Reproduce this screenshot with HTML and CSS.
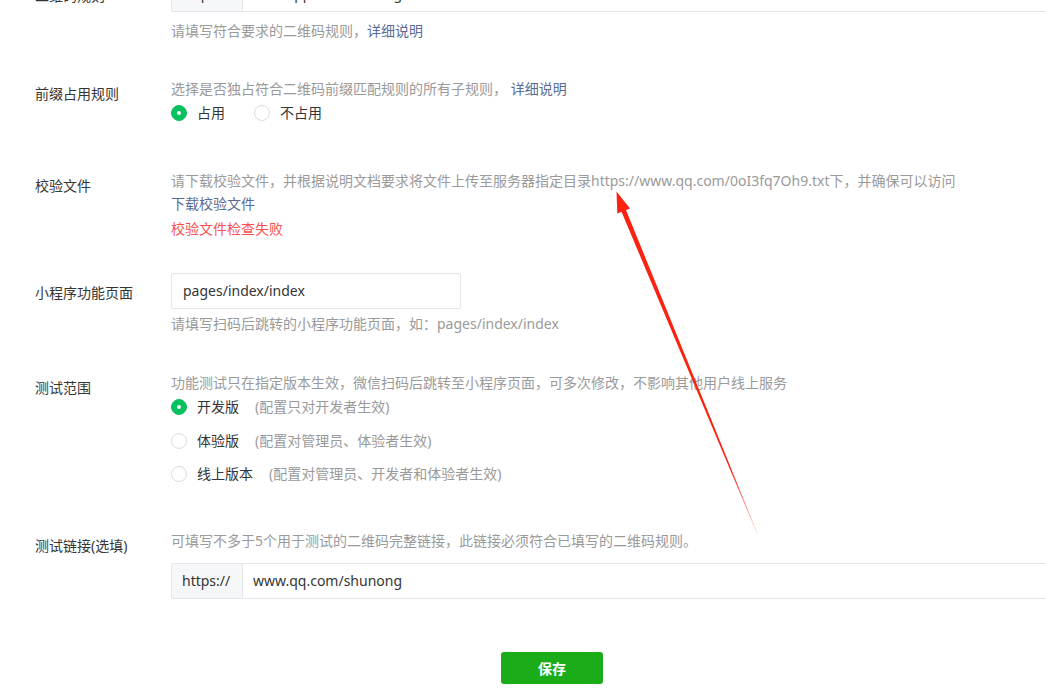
FILE: index.html
```html
<!DOCTYPE html>
<html lang="zh-CN">
<head>
<meta charset="utf-8">
<title>二维码规则</title>
<link rel="stylesheet" href="styles.css">
</head>
<body>
<div class="page">
  <div class="form">
    <div class="row row-first">
      <div class="label label-input">二维码规则</div>
      <div class="content">
        <div class="input-group wide">
          <span class="prefix">https://</span>
          <span class="input-text">www.qq.com/shunong</span>
        </div>
        <div class="hint hint-after-top">请填写符合要求的二维码规则，<a class="link">详细说明</a></div>
      </div>
    </div>

    <div class="row row-prefix">
      <div class="label">前缀占用规则</div>
      <div class="content">
        <div class="hint">选择是否独占符合二维码前缀匹配规则的所有子规则， <a class="link">详细说明</a></div>
        <div class="radio-line inline">
          <label class="radio checked"><span class="dot"></span><span class="radio-text">占用</span></label>
          <label class="radio"><span class="dot"></span><span class="radio-text">不占用</span></label>
        </div>
      </div>
    </div>

    <div class="row row-file">
      <div class="label">校验文件</div>
      <div class="content">
        <div class="hint">请下载校验文件，并根据说明文档要求将文件上传至服务器指定目录https://www.qq.com/0oI3fq7Oh9.txt下，并确保可以访问</div>
        <div class="line link-line"><a class="link">下载校验文件</a></div>
        <div class="line error-line">校验文件检查失败</div>
      </div>
    </div>

    <div class="row row-page">
      <div class="label label-input">小程序功能页面</div>
      <div class="content">
        <div class="input-box">pages/index/index</div>
        <div class="hint hint-after-input">请填写扫码后跳转的小程序功能页面，如：pages/index/index</div>
      </div>
    </div>

    <div class="row row-range">
      <div class="label">测试范围</div>
      <div class="content">
        <div class="hint">功能测试只在指定版本生效，微信扫码后跳转至小程序页面，可多次修改，不影响其他用户线上服务</div>
        <div class="radio-line r1">
          <label class="radio checked"><span class="dot"></span><span class="radio-text">开发版</span><span class="radio-note">(配置只对开发者生效)</span></label>
        </div>
        <div class="radio-line r2">
          <label class="radio"><span class="dot"></span><span class="radio-text">体验版</span><span class="radio-note">(配置对管理员、体验者生效)</span></label>
        </div>
        <div class="radio-line r3">
          <label class="radio"><span class="dot"></span><span class="radio-text">线上版本</span><span class="radio-note">(配置对管理员、开发者和体验者生效)</span></label>
        </div>
      </div>
    </div>

    <div class="row row-link">
      <div class="label">测试链接(选填)</div>
      <div class="content">
        <div class="hint">可填写不多于5个用于测试的二维码完整链接，此链接必须符合已填写的二维码规则。</div>
        <div class="input-group wide link-group">
          <span class="prefix">https://</span>
          <span class="input-text">www.qq.com/shunong</span>
        </div>
      </div>
    </div>

    <div class="actions">
      <button class="btn-save" type="button">保存</button>
    </div>
  </div>

  <svg class="arrow" width="1046" height="695" viewBox="0 0 1046 695" aria-hidden="true">
    <defs>
      <linearGradient id="fade" x1="616" y1="192" x2="758" y2="535" gradientUnits="userSpaceOnUse">
        <stop offset="0" stop-color="#fa2311"/>
        <stop offset="0.8" stop-color="#fa2311"/>
        <stop offset="1" stop-color="#fa2311" stop-opacity="0.15"/>
      </linearGradient>
    </defs>
    <polygon fill="url(#fade)" points="616.5,191.5 630,208.5 626,210 758.2,535 757.6,535 621.5,211.8 617.3,213.6"/>
  </svg>
</div>
</body>
</html>
```

FILE: styles.css
```css
* {
  box-sizing: border-box;
}

html, body {
  margin: 0;
  padding: 0;
  background: #ffffff;
}

body {
  font-family: "Noto Sans", "Noto Sans CJK SC", sans-serif;
  font-size: 14px;
  line-height: 20px;
  color: #353535;
}

.page {
  position: relative;
  width: 1046px;
  height: 695px;
  overflow: hidden;
}

.form {
  padding-left: 35px;
}

.row {
  display: flex;
}

.label {
  width: 136px;
  flex: none;
  padding-top: 5px;
  line-height: 20px;
  color: #353535;
  white-space: nowrap;
}

.label.label-input {
  padding-top: 10px;
}

.content {
  flex: 1;
  min-width: 0;
}

.hint {
  color: #9a9a9a;
  white-space: nowrap;
}

.link {
  color: #576b95;
  text-decoration: none;
}

.line {
  white-space: nowrap;
}

.error-line {
  color: #fa5151;
  margin-top: 5px;
}

.link-line {
  margin-top: 3px;
}

/* input group with prefix */
.input-group {
  display: flex;
  align-items: stretch;
  height: 36px;
  border: 1px solid #e4e6eb;
  border-right: none;
  border-radius: 2px 0 0 2px;
  background: #fff;
  margin-right: -4px;
}

.prefix {
  width: 71px;
  flex: none;
  display: flex;
  align-items: center;
  padding-left: 10px;
  background: #f6f7f9;
  border-right: 1px solid #e4e6eb;
  color: #353535;
}

.input-text {
  display: flex;
  align-items: center;
  padding-left: 10px;
  color: #353535;
}

.input-box {
  width: 290px;
  height: 36px;
  border: 1px solid #e4e6eb;
  border-radius: 2px;
  padding-left: 11px;
  display: flex;
  align-items: center;
  color: #353535;
}

/* radios */
.radio-line {
  display: flex;
  align-items: center;
  height: 20px;
}

.radio-line.inline {
  gap: 29px;
  margin-top: 4px;
}

.radio {
  display: inline-flex;
  align-items: center;
  white-space: nowrap;
}

.dot {
  width: 16px;
  height: 16px;
  border-radius: 50%;
  border: 1px solid #dcdcdc;
  background: #fff;
  margin-right: 10px;
  position: relative;
  flex: none;
}

.radio.checked .dot {
  border-color: #07c160;
  background: #07c160;
}

.radio.checked .dot::after {
  content: "";
  position: absolute;
  left: 5px;
  top: 5px;
  width: 4px;
  height: 4px;
  border-radius: 50%;
  background: #fff;
}

.radio-text {
  color: #353535;
}

.radio-note {
  color: #9a9a9a;
  margin-left: 16px;
}

/* vertical rhythm */
.row-first {
  margin-top: -24px;
}

.hint-after-top {
  margin-top: 9px;
}

.row-prefix {
  margin-top: 38px;
}

.row-file {
  margin-top: 48px;
}

.row-page {
  margin-top: 34px;
}

.hint-after-input {
  margin-top: 5px;
}

.row-range {
  margin-top: 39px;
}

.radio-line.r1 {
  margin-top: 4px;
}

.radio-line.r2 {
  margin-top: 14px;
}

.radio-line.r3 {
  margin-top: 13px;
}

.row-link {
  margin-top: 47px;
}

.link-group {
  margin-top: 12px;
}

.actions {
  margin-top: 53px;
  padding-left: 466px;
}

.btn-save {
  width: 102px;
  height: 32px;
  border: none;
  border-radius: 3px;
  background: #1aad19;
  color: #ffffff;
  font-family: "Noto Sans", "Noto Sans CJK SC", sans-serif;
  font-size: 14px;
  font-weight: 700;
  padding: 0;
  cursor: pointer;
}

.arrow {
  position: absolute;
  left: 0;
  top: 0;
  pointer-events: none;
}
```
